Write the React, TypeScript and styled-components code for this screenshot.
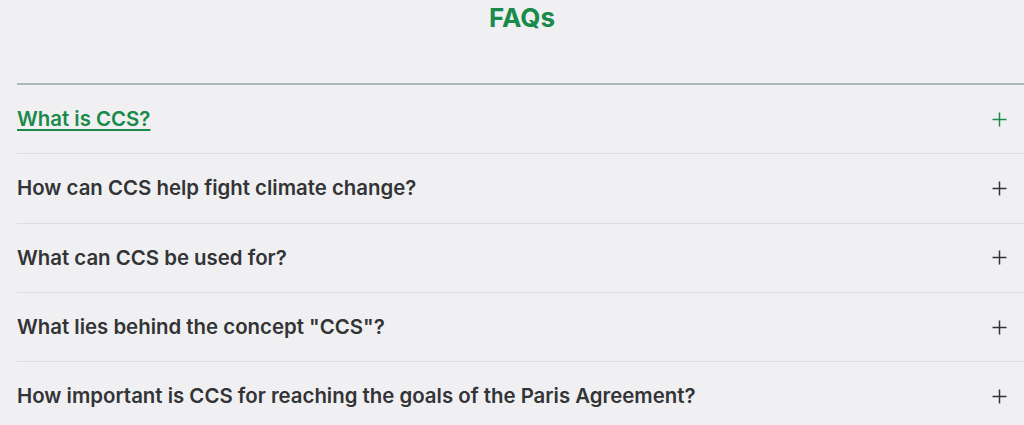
import React from "react";
import styled, { createGlobalStyle } from "styled-components";

const Global = createGlobalStyle`
  html, body { margin: 0; padding: 0; background: #f0f0f2; overflow: hidden; }
  body { font-family: Inter, "Noto Sans", sans-serif; }
`;

const Page = styled.div`
  width: 1010px;
  margin-left: 17px;
`;

const Title = styled.h2`
  margin: 0;
  padding-top: 3px;
  height: 83px;
  box-sizing: border-box;
  text-align: center;
  color: #188a4a;
  font-size: 26px;
  font-weight: 700;
  line-height: 30px;
`;

const List = styled.div`
  border-top: 2px solid #a8bab7;
`;

const Item = styled.div`
  display: flex;
  align-items: center;
  justify-content: space-between;
  padding: 21px 20px 21px 0;
  height: 26.33px;
  border-bottom: 1px solid #dcdddf;
`;

const Question = styled.span<{ $active?: boolean }>`
  font-size: 20.4px;
  font-weight: 600;
  line-height: 26px;
  color: ${(p) => (p.$active ? "#188a4a" : "#333436")};
  text-decoration: ${(p) => (p.$active ? "underline" : "none")};
  text-decoration-thickness: 2px;
  text-underline-offset: 3px;
`;

const Plus = styled.svg<{ $active?: boolean }>`
  width: 15px;
  height: 15px;
  flex: none;
  color: ${(p) => (p.$active ? "#188a4a" : "#333436")};
`;

const questions = [
  "What is CCS?",
  "How can CCS help fight climate change?",
  "What can CCS be used for?",
  'What lies behind the concept "CCS"?',
  "How important is CCS for reaching the goals of the Paris Agreement?",
];

export default function App() {
  return (
    <>
      <Global />
      <Page>
        <Title>FAQs</Title>
        <List>
          {questions.map((q, i) => (
            <Item key={q}>
              <Question $active={i === 0}>{q}</Question>
              <Plus $active={i === 0} viewBox="0 0 15 15">
                <path d="M7.5 0.5v14M0.5 7.5h14" stroke="currentColor" strokeWidth="1.5" fill="none" />
              </Plus>
            </Item>
          ))}
        </List>
      </Page>
    </>
  );
}
